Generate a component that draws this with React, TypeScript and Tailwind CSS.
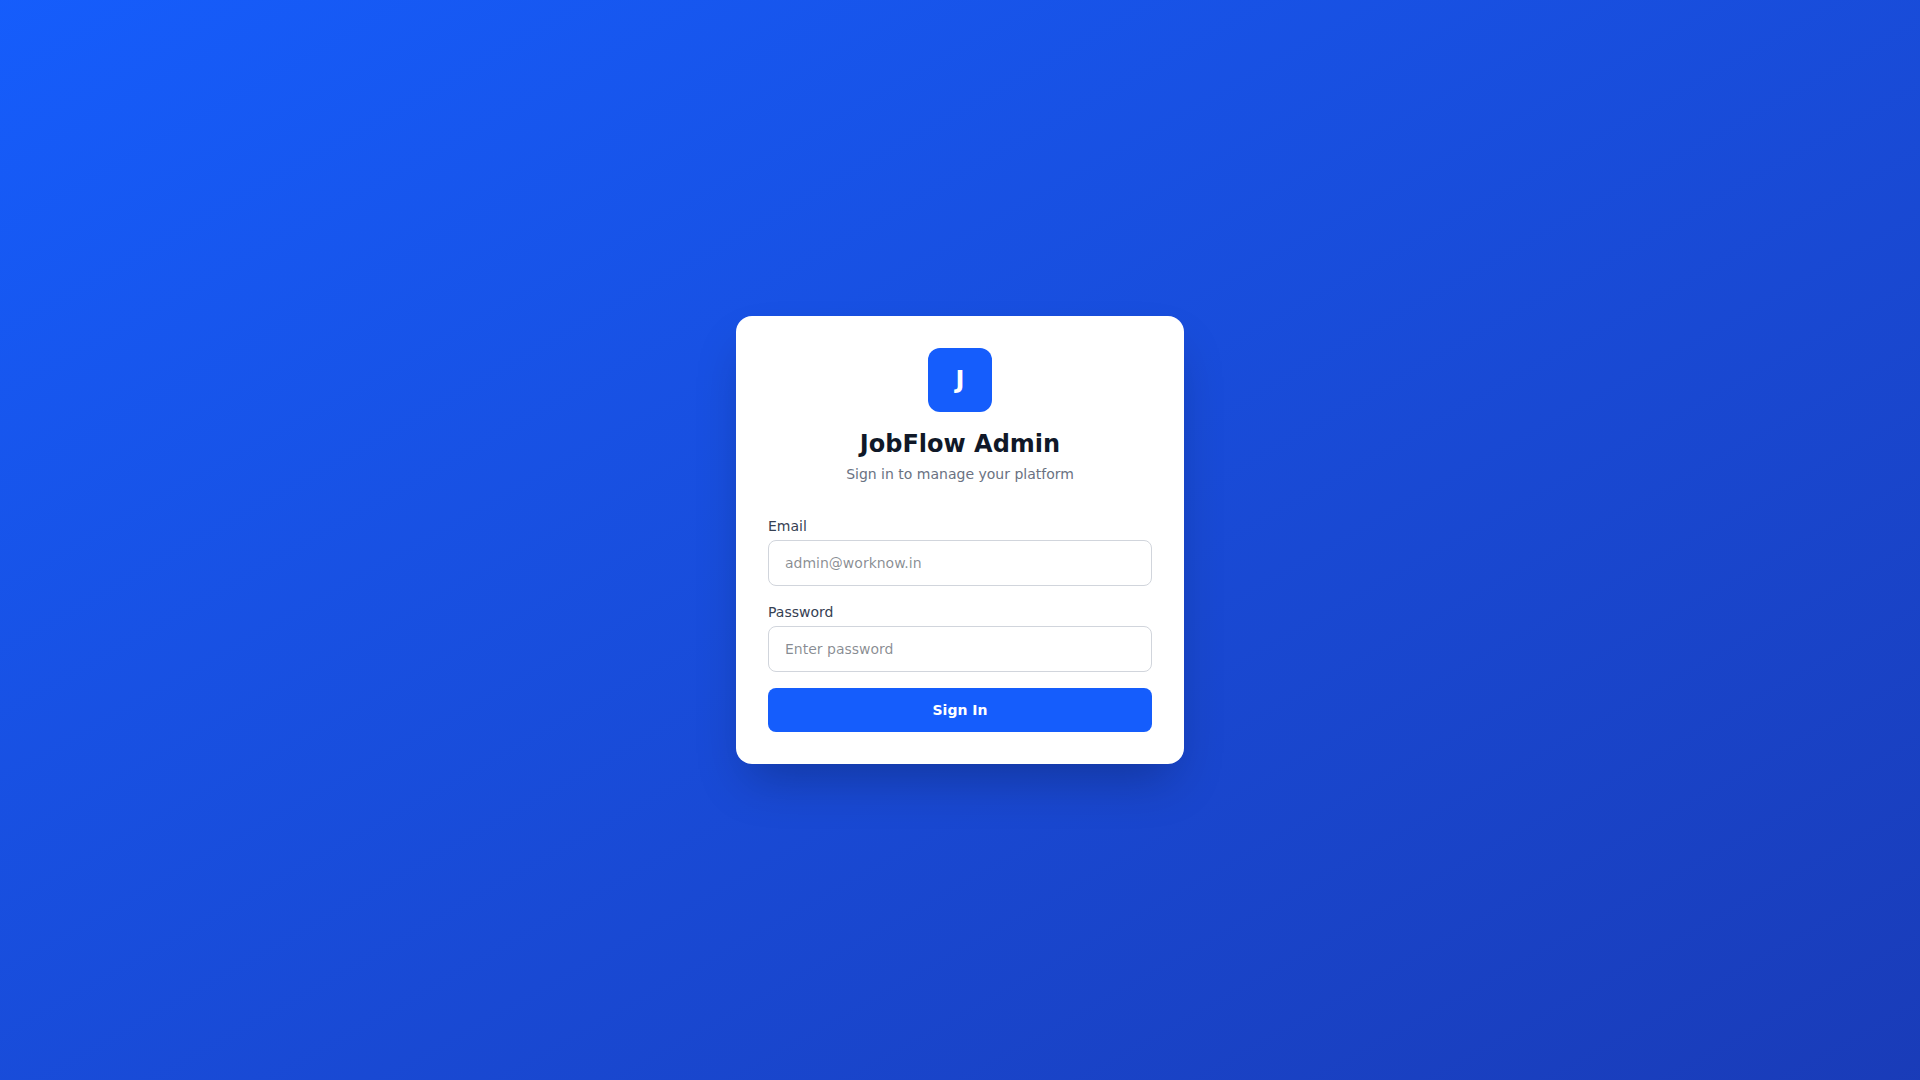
import React, { useState } from 'react';

export default function LoginPage() {
    const [email, setEmail] = useState('');
    const [password, setPassword] = useState('');

    const handleSubmit = (e: React.FormEvent) => {
        e.preventDefault();
    };

    return (
        <div className="min-h-screen flex items-center justify-center bg-gradient-to-br from-blue-600 to-blue-800 p-4 text-gray-900 antialiased font-['DejaVu_Sans',sans-serif]">
            <div className="w-full max-w-md bg-white rounded-2xl shadow-2xl p-8">
                <div className="text-center mb-8">
                    <div className="w-16 h-16 bg-blue-600 rounded-xl flex items-center justify-center mx-auto mb-4">
                        <span className="text-white text-2xl font-bold">J</span>
                    </div>
                    <h1 className="text-2xl font-bold text-gray-900">JobFlow Admin</h1>
                    <p className="text-gray-500 text-sm mt-1">Sign in to manage your platform</p>
                </div>

                <form onSubmit={handleSubmit} className="space-y-4">
                    <div>
                        <label htmlFor="email" className="block text-sm font-medium text-gray-700 mb-1">Email</label>
                        <input
                            id="email"
                            type="email"
                            value={email}
                            onChange={(e) => setEmail(e.target.value)}
                            placeholder="admin@worknow.in"
                            className="w-full px-4 py-3 border border-gray-300 rounded-lg text-sm outline-none focus:ring-2 focus:ring-blue-500"
                        />
                    </div>
                    <div>
                        <label htmlFor="password" className="block text-sm font-medium text-gray-700 mb-1">Password</label>
                        <input
                            id="password"
                            type="password"
                            value={password}
                            onChange={(e) => setPassword(e.target.value)}
                            placeholder="Enter password"
                            className="w-full px-4 py-3 border border-gray-300 rounded-lg text-sm outline-none focus:ring-2 focus:ring-blue-500"
                        />
                    </div>
                    <button
                        type="submit"
                        className="w-full py-3 bg-blue-600 text-white text-sm font-semibold rounded-lg hover:bg-blue-700 transition-colors"
                    >
                        Sign In
                    </button>
                </form>
            </div>
        </div>
    );
}
